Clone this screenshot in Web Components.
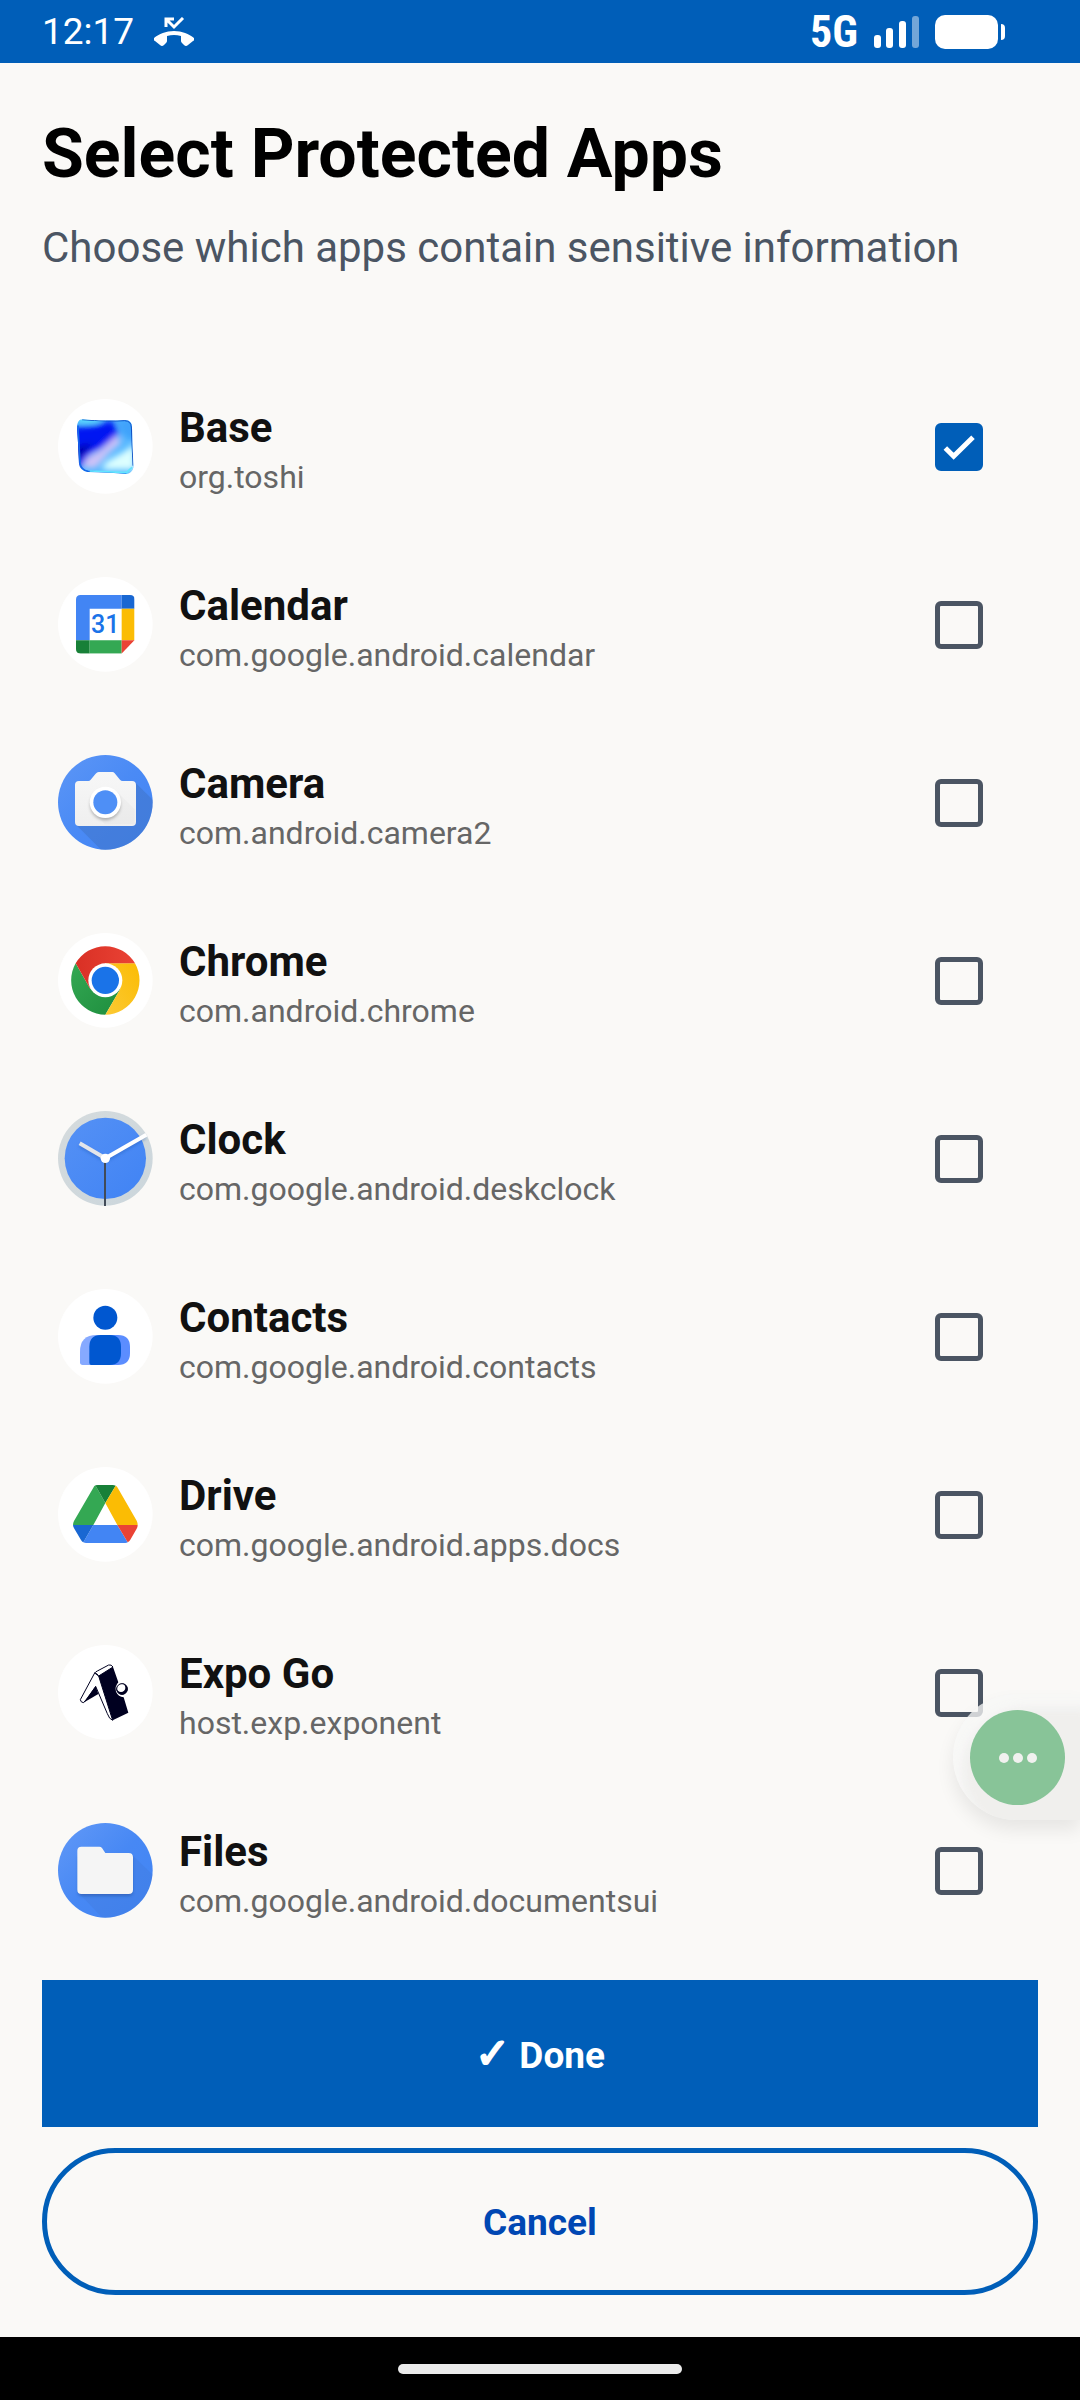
<!DOCTYPE html>
<html lang="en">
<head>
<meta charset="utf-8">
<meta name="viewport" content="width=device-width, initial-scale=1">
<title>Select Protected Apps</title>
<style>
  body {
    margin: 0;
    background: #faf9f7;
    font-family: Roboto, "Liberation Sans", sans-serif;
  }
</style>
</head>
<body>
<protected-apps>
  <app-row icon="base" name="Base" package="org.toshi" checked></app-row>
  <app-row icon="calendar" name="Calendar" package="com.google.android.calendar"></app-row>
  <app-row icon="camera" name="Camera" package="com.android.camera2"></app-row>
  <app-row icon="chrome" name="Chrome" package="com.android.chrome"></app-row>
  <app-row icon="clock" name="Clock" package="com.google.android.deskclock"></app-row>
  <app-row icon="contacts" name="Contacts" package="com.google.android.contacts"></app-row>
  <app-row icon="drive" name="Drive" package="com.google.android.apps.docs"></app-row>
  <app-row icon="expo" name="Expo Go" package="host.exp.exponent"></app-row>
  <app-row icon="files" name="Files" package="com.google.android.documentsui"></app-row>
</protected-apps>

<script>
// every drawing uses a 285 x 285 box, the launcher circle fills it
const ICONS = {
  base: `
    <defs>
      <clipPath id="tile"><path d="M66 62Q72 60 90 62Q150 67 202 63Q221 64 222 84Q223 150 227 204Q222 222 206 225Q160 220 88 219Q66 215 63 194Q61 140 57 84Q58 68 66 62Z"/></clipPath>
      <filter id="soft" x="-50%" y="-50%" width="200%" height="200%"><feGaussianBlur stdDeviation="9"/></filter>
      <filter id="edge"><feGaussianBlur stdDeviation="2"/></filter>
    </defs>
    <circle cx="142" cy="142" r="142" fill="#fff"/>
    <g clip-path="url(#tile)">
      <rect x="50" y="50" width="185" height="185" fill="#55b8ff"/>
      <g filter="url(#soft)">
        <path d="M30 85L110 78L165 62L182 105L130 148L95 165L60 215H30Z" fill="#0018f2"/>
        <path d="M40 150L105 132L75 168L40 200Z" fill="#0200a8"/>
        <path d="M175 60H240V130L195 110Z" fill="#3fa2fb"/>
        <path d="M176 108L190 130L150 165L112 208L74 205L84 178L130 152Z" fill="#cfc2f7"/>
        <path d="M230 135V212H130L145 188L195 160Z" fill="#dcffff"/>
        <ellipse cx="90" cy="62" rx="38" ry="8" fill="#5ff0ff"/>
      </g>
      <g filter="url(#edge)" fill="none">
        <path d="M60 80L66 194Q70 214 90 217L205 224" stroke="#1767e8" stroke-width="5"/>
        <path d="M72 62Q150 68 200 65Q219 66 220 84L225 200" stroke="#104fc4" stroke-width="3"/>
        <path d="M95 216L205 221L222 205" stroke="#63e5ff" stroke-width="5"/>
      </g>
    </g>`,
  calendar: `
    <defs><clipPath id="sheet"><path d="M68 54H216Q230 54 230 68V190L191 230H68Q54 230 54 216V68Q54 54 68 54Z"/></clipPath></defs>
    <circle cx="142" cy="142" r="142" fill="#fff"/>
    <g clip-path="url(#sheet)">
      <path d="M54 54H191V95H95V190H54Z" fill="#4285f4"/>
      <path d="M191 54H230V95H191Z" fill="#1967d2"/>
      <path d="M191 95H230V190H191Z" fill="#fbbc04"/>
      <path d="M54 190H95V230H54Z" fill="#188038"/>
      <path d="M95 190H191V230H95Z" fill="#34a853"/>
      <path d="M191 190H230L191 230Z" fill="#ea4335"/>
    </g>
    <text x="142" y="167" text-anchor="middle" font-family="Roboto, sans-serif" font-size="75" font-weight="500" fill="#1a73e8">31</text>`,
  camera: `
    <defs>
      <linearGradient id="sky" x1="0" y1="0" x2="1" y2="1"><stop offset="0" stop-color="#5c96f6"/><stop offset=".5" stop-color="#4a8af5"/><stop offset="1" stop-color="#4285f4"/></linearGradient>
      <linearGradient id="body" x1="0" y1="0" x2="0" y2="1"><stop offset="0" stop-color="#f7f7f7"/><stop offset="1" stop-color="#efefef"/></linearGradient>
      <clipPath id="disc"><circle cx="142" cy="142" r="142"/></clipPath>
      <filter id="drop" x="-50%" y="-50%" width="200%" height="200%"><feGaussianBlur stdDeviation="5"/></filter>
    </defs>
    <circle cx="142" cy="142" r="142" fill="url(#sky)"/>
    <g clip-path="url(#disc)">
      <path d="M231 82L300 150V300H145L55 210Z" fill="#3f6fb8" fill-opacity=".4"/>
      <path d="M51 90Q51 78 63 78H91Q95 78 98 74L113 56Q117 51 122 51H163Q167 51 170 55L186 74Q189 78 194 78H222Q234 78 234 90V201Q234 213 222 213H63Q51 213 51 201Z" fill="url(#body)"/>
      <path d="M176 109L230 163V208H140L109 175Z" fill="#000" fill-opacity=".02"/>
    </g>
    <circle cx="142" cy="150" r="46" fill="#000" fill-opacity=".25" filter="url(#drop)"/>
    <circle cx="142" cy="142" r="47" fill="#fff"/>
    <circle cx="142" cy="142" r="36" fill="#4e8ff6"/>`,
  chrome: `
    <defs>
      <linearGradient id="red" x1="0" y1="0" x2="1" y2="0"><stop offset="0" stop-color="#d93025"/><stop offset="1" stop-color="#ea4335"/></linearGradient>
      <linearGradient id="yellow" x1="0" y1="1" x2="1" y2="0"><stop offset="0" stop-color="#fcc934"/><stop offset="1" stop-color="#fbbc04"/></linearGradient>
      <linearGradient id="green" x1="1" y1="1" x2="0" y2="0"><stop offset="0" stop-color="#1e8e3e"/><stop offset="1" stop-color="#34a853"/></linearGradient>
    </defs>
    <circle cx="142" cy="142" r="142" fill="#fff"/>
    <path d="M142 245A103 103 0 0 1 53 91L97 168L187 168Z" fill="url(#green)"/>
    <path d="M231 91A103 103 0 0 1 142 245L187 168L142 91Z" fill="url(#yellow)"/>
    <path d="M53 91A103 103 0 0 1 231 91L142 91L97 168Z" fill="url(#red)"/>
    <circle cx="142" cy="142" r="51" fill="#fff"/>
    <circle cx="142" cy="142" r="41" fill="#1a73e8"/>`,
  clock: `
    <defs>
      <linearGradient id="rim" x1="0" y1="0" x2="1" y2="1"><stop offset="0" stop-color="#d5dbdd"/><stop offset="1" stop-color="#cbd6dc"/></linearGradient>
      <linearGradient id="face" x1="0" y1="0" x2="1" y2="1"><stop offset="0" stop-color="#5591f5"/><stop offset="1" stop-color="#4083f4"/></linearGradient>
      <filter id="shade" x="-50%" y="-50%" width="200%" height="200%"><feGaussianBlur stdDeviation="4"/></filter>
    </defs>
    <circle cx="142" cy="142" r="142" fill="url(#rim)"/>
    <circle cx="142" cy="142" r="122" fill="url(#face)"/>
    <path d="M66 103L142 148L262 78" fill="none" stroke="#1b4da8" stroke-opacity=".35" stroke-width="12" filter="url(#shade)"/>
    <path d="M65 97L142 142" stroke="#e4e6ea" stroke-width="12"/>
    <path d="M142 142L265 71" stroke="#fff" stroke-width="12"/>
    <path d="M141 142V285" stroke="#424b58" stroke-width="6"/>
    <circle cx="142" cy="142" r="14" fill="#fff"/>`,
  contacts: `
    <circle cx="142" cy="142" r="142" fill="#fff"/>
    <path d="M116 138H142V228H74Q66 228 66 220V188Q66 138 116 138Z" fill="#86a9ff"/>
    <path d="M142 138H180Q216 138 216 174V192Q216 228 180 228H142Z" fill="#5b8dff"/>
    <path d="M128 138H155Q189 138 189 174V192Q189 228 155 228H100Q94 228 94 222V174Q94 138 128 138Z" fill="#0057d0"/>
    <circle cx="142" cy="86" r="36" fill="#0057d0"/>`,
  drive: `
    <circle cx="142" cy="142" r="142" fill="#fff"/>
    <path d="M106 62Q108 57 112 55L142 108L106 174H45Q45 168 48 162Z" fill="#34a853"/>
    <path d="M112 55Q115 54 120 54H164Q169 54 173 56L142 108Z" fill="#188038"/>
    <path d="M173 56Q177 58 179 62L236 161Q239 167 239 174H178L142 108Z" fill="#fbbc04"/>
    <path d="M106 174H178L209 226Q206 228 202 228H84Q80 228 76 226Z" fill="#4285f4"/>
    <path d="M45 174H106L76 226Q72 224 69 219L49 185Q45 179 45 174Z" fill="#1967d2"/>
    <path d="M178 174H239Q239 180 236 185L217 218Q214 223 209 226Z" fill="#ea4335"/>`,
  expo: `
    <circle cx="142" cy="142" r="142" fill="#fff"/>
    <g fill="#fff" stroke="#000020" stroke-width="3" stroke-linejoin="round">
      <path d="M110 84L67 164Q68 172 76 173L84 166L113 124L148 206Q154 223 164 226L122 93Z"/>
      <path d="M110 84Q113 80 118 78L152 60Q160 58 165 66L122 93Q117 84 110 84Z"/>
    </g>
    <path d="M122 93L165 66L181 112Q170 124 174 140Q181 155 197 157L211 203L164 226Z" fill="#000020"/>
    <path d="M76 173L113 124L121 147Z" fill="#000020"/>
    <circle cx="192" cy="132" r="17" fill="#000020"/>
    <circle cx="189" cy="128" r="13" fill="#fff"/>
    <circle cx="192" cy="132" r="16" fill="none" stroke="#000020" stroke-width="3"/>`,
  files: `
    <defs>
      <linearGradient id="sky" x1="0" y1="0" x2="1" y2="1"><stop offset="0" stop-color="#6299f7"/><stop offset=".5" stop-color="#4788f4"/><stop offset="1" stop-color="#4285f4"/></linearGradient>
      <clipPath id="disc"><circle cx="142" cy="142" r="142"/></clipPath>
      <filter id="drop" x="-50%" y="-50%" width="200%" height="200%"><feGaussianBlur stdDeviation="5"/></filter>
    </defs>
    <circle cx="142" cy="142" r="142" fill="url(#sky)"/>
    <g clip-path="url(#disc)">
      <path d="M220 94L300 170V300H148L62 210Z" fill="#3b62ad" fill-opacity=".12"/>
      <rect x="60" y="98" width="164" height="121" rx="12" fill="#163d85" fill-opacity=".4" filter="url(#drop)"/>
    </g>
    <path d="M58 83Q58 71 70 71H124Q129 71 132 75L142 90H212Q225 90 225 103V200Q225 213 212 213H70Q58 213 58 200Z" fill="#f5f5f5"/>`
};

class StatusBar extends HTMLElement {
  constructor() {
    super();

    this.attachShadow({ mode: "open" });
  }

  connectedCallback() {
    this.shadowRoot.innerHTML = `
      <style>
        :host {
          display: flex;
          align-items: center;
          justify-content: space-between;
          height: 63px;
          padding: 0 74px 0 42px;
          background: #005eb8;
          color: #fff;
        }

        .group {
          display: flex;
          align-items: center;
        }

        .left {
          gap: 20px;
        }

        .right {
          gap: 16px;
        }

        time {
          font-size: 37px;
          line-height: 60px;
        }

        .network {
          font-family: "Liberation Sans Narrow", "Roboto Condensed", Roboto, sans-serif;
          font-size: 44px;
          line-height: 60px;
          font-weight: 700;
        }

        svg {
          display: block;
        }
      </style>

      <div class="group left">
        <time>12:17</time>
        <svg width="40" height="30" viewBox="0 0 40 30" role="img" aria-label="Missed call">
          <path d="M20 14C12 14 5 17 0 21Q-1 23 1 24L6 28Q8 30 10 28L12 26Q13 25 13 24V19Q20 17 27 19V24Q27 25 28 26L30 28Q32 30 34 28L39 24Q41 23 40 21C35 17 28 14 20 14Z" fill="#fff"/>
          <path d="M12 10V2H20M12 2L20 10L29 1" fill="none" stroke="#fff" stroke-width="3"/>
        </svg>
      </div>

      <div class="group right">
        <span class="network">5G</span>
        <svg width="45" height="34" viewBox="0 0 45 34" fill="#fff" role="img" aria-label="Signal">
          <rect x="0" y="20" width="7" height="13" rx="3"/>
          <rect x="12" y="13" width="7" height="20" rx="3"/>
          <rect x="25" y="6" width="7" height="27" rx="3"/>
          <rect x="38" y="1" width="7" height="32" rx="3" fill-opacity=".45"/>
        </svg>
        <svg width="71" height="34" viewBox="0 0 71 34" fill="#fff" role="img" aria-label="Battery">
          <rect width="63" height="34" rx="10"/>
          <path d="M66 9Q70 9 70 13V21Q70 25 66 25Z"/>
        </svg>
      </div>
    `;
  }
}

class AppIcon extends HTMLElement {
  constructor() {
    super();

    this.attachShadow({ mode: "open" });
  }

  connectedCallback() {
    const drawing = ICONS[this.getAttribute("name")] || "";

    this.shadowRoot.innerHTML = `
      <style>
        :host {
          display: block;
          flex: none;
          width: 95px;
          padding-bottom: 1px;
        }

        svg {
          display: block;
          width: 95px;
          height: 95px;
        }
      </style>

      <svg viewBox="0 0 285 285" aria-hidden="true">${drawing}</svg>
    `;
  }
}

class AppRow extends HTMLElement {
  constructor() {
    super();

    this.attachShadow({ mode: "open" });
  }

  connectedCallback() {
    this.render();
    this.listen();
  }

  listen() {
    this.shadowRoot
      .querySelector("input")
      .addEventListener("change", (event) => {
        this.toggleAttribute("checked", event.target.checked);
      });
  }

  render() {
    const icon = this.getAttribute("icon") || "";
    const name = this.getAttribute("name") || "";
    const pkg = this.getAttribute("package") || "";
    const checked = this.hasAttribute("checked") ? "checked" : "";

    this.shadowRoot.innerHTML = `
      <style>
        :host {
          display: block;
        }

        label {
          display: flex;
          align-items: center;
          gap: 26px;
          min-height: 178px;
          padding: 0 55px 0 16px;
        }

        .text {
          flex: 1;
          min-width: 0;
        }

        .name {
          display: block;
          font-size: 42px;
          line-height: 60px;
          font-weight: 700;
          color: #111;
        }

        .package {
          display: block;
          font-size: 32px;
          line-height: 38px;
          color: #666;
        }

        .box {
          display: grid;
          flex: none;
        }

        .box > * {
          grid-area: 1 / 1;
        }

        input {
          appearance: none;
          box-sizing: border-box;
          width: 48px;
          height: 48px;
          margin: 0;
          border: 5px solid #4b5563;
          border-radius: 6px;
        }

        input:checked {
          border-color: #005eb8;
          background: #005eb8;
        }

        .tick {
          display: none;
          width: 48px;
          height: 48px;
          pointer-events: none;
        }

        input:checked + .tick {
          display: block;
        }
      </style>

      <label>
        <app-icon name="${icon}"></app-icon>
        <span class="text">
          <span class="name">${name}</span>
          <span class="package">${pkg}</span>
        </span>
        <span class="box">
          <input type="checkbox" ${checked}>
          <svg class="tick" viewBox="0 0 144 144" aria-hidden="true">
            <path d="M31 75L56 100L114 43" fill="none" stroke="#fff" stroke-width="15"/>
          </svg>
        </span>
      </label>
    `;
  }
}

class ActionButton extends HTMLElement {
  constructor() {
    super();

    this.attachShadow({ mode: "open" });
  }

  connectedCallback() {
    this.shadowRoot.innerHTML = `
      <style>
        :host {
          display: block;
        }

        button {
          box-sizing: border-box;
          width: 100%;
          min-height: 147px;
          margin: 0;
          padding: 3px 0 0;
          border: 5px solid #005eb8;
          background: #005eb8;
          color: #fff;
          font-family: Roboto, "DejaVu Sans", sans-serif;
          font-size: 37px;
          line-height: 44px;
          font-weight: 700;
        }

        :host([outlined]) button {
          border-radius: 74px;
          background: transparent;
          color: #0047b3;
        }
      </style>

      <button type="button"><slot></slot></button>
    `;
  }
}

class FloatingBubble extends HTMLElement {
  constructor() {
    super();

    this.attachShadow({ mode: "open" });
  }

  connectedCallback() {
    this.shadowRoot.innerHTML = `
      <style>
        :host {
          position: fixed;
          right: 0;
          bottom: 580px;
          display: block;
          padding: 16px 15px 15px 17px;
          border-radius: 63px 0 0 63px;
          background: rgba(230, 229, 227, .5);
          box-shadow:
            0 10px 18px rgba(0, 0, 0, .08),
            inset 10px 14px 12px rgba(255, 255, 255, .55);
        }

        button {
          display: flex;
          align-items: center;
          justify-content: center;
          gap: 4px;
          width: 95px;
          height: 95px;
          padding: 0;
          border: 0;
          border-radius: 50%;
          background: #88c498;
        }

        i {
          width: 10px;
          height: 10px;
          border-radius: 50%;
          background: #f1f1ef;
        }
      </style>

      <button type="button" aria-label="More"><i></i><i></i><i></i></button>
    `;
  }
}

class GestureBar extends HTMLElement {
  constructor() {
    super();

    this.attachShadow({ mode: "open" });
  }

  connectedCallback() {
    this.shadowRoot.innerHTML = `
      <style>
        :host {
          display: flex;
          align-items: center;
          justify-content: center;
          height: 63px;
          background: #000;
        }

        .handle {
          width: 284px;
          height: 10px;
          border-radius: 5px;
          background: #ebebeb;
        }
      </style>

      <div class="handle"></div>
    `;
  }
}

class ProtectedApps extends HTMLElement {
  constructor() {
    super();

    this.attachShadow({ mode: "open" });
  }

  connectedCallback() {
    this.shadowRoot.innerHTML = `
      <style>
        :host {
          display: flex;
          flex-direction: column;
          min-height: 100vh;
        }

        header {
          padding: 51px 42px 85px;
        }

        h1 {
          margin: 0 0 29px;
          font-size: 68px;
          line-height: 80px;
          font-weight: 700;
          color: #000;
        }

        p {
          margin: 0;
          font-size: 42px;
          line-height: 50px;
          color: #4b5563;
        }

        main {
          flex: 1;
          padding: 0 42px;
        }

        footer {
          display: flex;
          flex-direction: column;
          gap: 21px;
          padding: 20px 42px 42px;
        }

        .mark {
          font-family: "DejaVu Sans", sans-serif;
          font-size: 42px;
          line-height: 1;
          -webkit-text-stroke: 2px currentColor;
        }
      </style>

      <status-bar></status-bar>
      <header>
        <h1>Select Protected Apps</h1>
        <p>Choose which apps contain sensitive information</p>
      </header>
      <main><slot></slot></main>
      <footer>
        <action-button><span class="mark">✓</span> Done</action-button>
        <action-button outlined>Cancel</action-button>
      </footer>
      <gesture-bar></gesture-bar>
      <floating-bubble></floating-bubble>
    `;
  }
}

customElements.define("status-bar", StatusBar);
customElements.define("app-icon", AppIcon);
customElements.define("app-row", AppRow);
customElements.define("action-button", ActionButton);
customElements.define("floating-bubble", FloatingBubble);
customElements.define("gesture-bar", GestureBar);
customElements.define("protected-apps", ProtectedApps);
</script>
</body>
</html>
